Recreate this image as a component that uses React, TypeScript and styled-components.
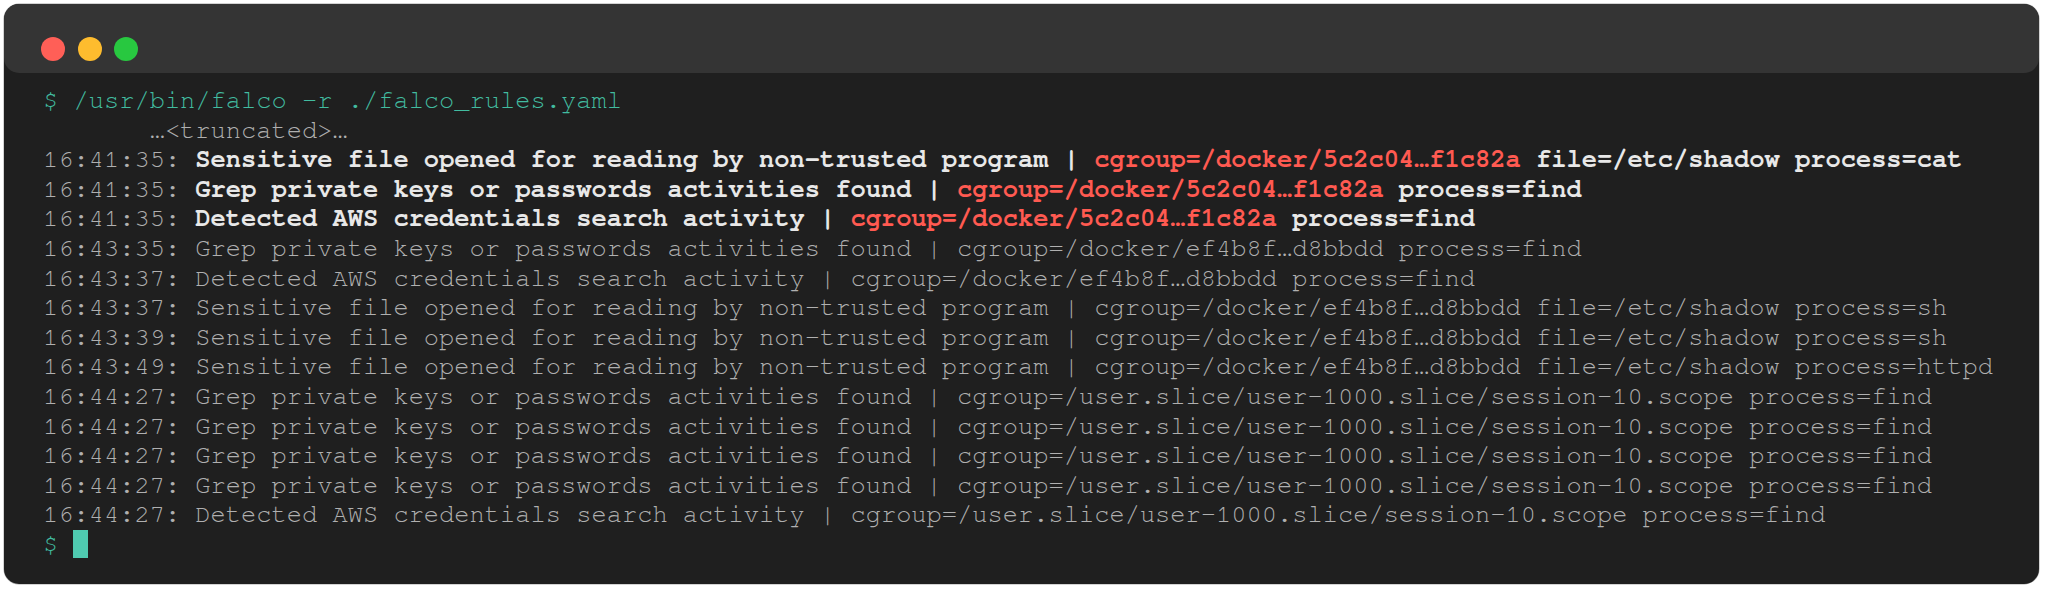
import React from "react";
import styled, { createGlobalStyle } from "styled-components";

const Global = createGlobalStyle`
  html, body { margin: 0; padding: 0; background: #ffffff; }
  #root { padding: 4px; }
`;

const Window = styled.div`
  width: 2035px;
  height: 580px;
  box-sizing: border-box;
  border-radius: 15px;
  background: #1f1f1f;
  overflow: hidden;
  box-shadow: 0 0 0 0.5px rgba(0, 0, 0, 0.35);
  display: flex;
  flex-direction: column;
`;

const TitleBar = styled.div`
  height: 69px;
  flex: none;
  box-sizing: border-box;
  background: #343434;
  border-radius: 15px;
  display: flex;
  align-items: flex-start;
  gap: 12.5px;
  padding: 33px 0 0 37px;
`;

const Dot = styled.span<{ $color: string }>`
  width: 24px;
  height: 24px;
  border-radius: 50%;
  background: ${(p) => p.$color};
  display: block;
`;

const Body = styled.div`
  padding: 13px 0 0 39px;
  font-family: "Nimbus Mono PS", "Nimbus Mono L", "FreeMono", "Courier", "Liberation Mono", monospace;
  font-size: 25.4px;
  line-height: 29.6px;
  color: #b0b0b0;
  white-space: pre;
`;

const Line = styled.div<{ $tone?: "prompt" | "normal" }>`
  color: ${(p) => (p.$tone === "prompt" ? "#42bca0" : "#b0b0b0")};
  height: 29.6px;
`;

const Strong = styled.span<{ $red?: boolean }>`
  font-weight: 700;
  color: ${(p) => (p.$red ? "#ff5a51" : "#e8e8e8")};
`;

const Cursor = styled.span`
  display: inline-block;
  width: 15px;
  height: 28px;
  background: #4fcab0;
  vertical-align: -6px;
`;

type Alert = {
  time: string;
  rule: string;
  cgroup: string;
  file?: string;
  proc: string;
};

const hot: Alert[] = [
  {
    time: "16:41:35",
    rule: "Sensitive file opened for reading by non-trusted program",
    cgroup: "cgroup=/docker/5c2c04…f1c82a",
    file: "/etc/shadow",
    proc: "cat",
  },
  {
    time: "16:41:35",
    rule: "Grep private keys or passwords activities found",
    cgroup: "cgroup=/docker/5c2c04…f1c82a",
    proc: "find",
  },
  {
    time: "16:41:35",
    rule: "Detected AWS credentials search activity",
    cgroup: "cgroup=/docker/5c2c04…f1c82a",
    proc: "find",
  },
];

const cold: Alert[] = [
  { time: "16:43:35", rule: "Grep private keys or passwords activities found", cgroup: "cgroup=/docker/ef4b8f…d8bbdd", proc: "find" },
  { time: "16:43:37", rule: "Detected AWS credentials search activity", cgroup: "cgroup=/docker/ef4b8f…d8bbdd", proc: "find" },
  { time: "16:43:37", rule: "Sensitive file opened for reading by non-trusted program", cgroup: "cgroup=/docker/ef4b8f…d8bbdd", file: "/etc/shadow", proc: "sh" },
  { time: "16:43:39", rule: "Sensitive file opened for reading by non-trusted program", cgroup: "cgroup=/docker/ef4b8f…d8bbdd", file: "/etc/shadow", proc: "sh" },
  { time: "16:43:49", rule: "Sensitive file opened for reading by non-trusted program", cgroup: "cgroup=/docker/ef4b8f…d8bbdd", file: "/etc/shadow", proc: "httpd" },
  { time: "16:44:27", rule: "Grep private keys or passwords activities found", cgroup: "cgroup=/user.slice/user-1000.slice/session-10.scope", proc: "find" },
  { time: "16:44:27", rule: "Grep private keys or passwords activities found", cgroup: "cgroup=/user.slice/user-1000.slice/session-10.scope", proc: "find" },
  { time: "16:44:27", rule: "Grep private keys or passwords activities found", cgroup: "cgroup=/user.slice/user-1000.slice/session-10.scope", proc: "find" },
  { time: "16:44:27", rule: "Grep private keys or passwords activities found", cgroup: "cgroup=/user.slice/user-1000.slice/session-10.scope", proc: "find" },
  { time: "16:44:27", rule: "Detected AWS credentials search activity", cgroup: "cgroup=/user.slice/user-1000.slice/session-10.scope", proc: "find" },
];

const tail = (a: Alert) => `${a.file ? ` file=${a.file}` : ""} process=${a.proc}`;

export default function App() {
  return (
    <>
      <Global />
      <Window>
        <TitleBar>
          <Dot $color="#ff5f57" />
          <Dot $color="#febc2e" />
          <Dot $color="#28c840" />
        </TitleBar>
        <Body>
          <Line $tone="prompt">$ /usr/bin/falco -r ./falco_rules.yaml</Line>
          <Line>{"       …<truncated>…"}</Line>
          {hot.map((a, i) => (
            <Line key={"h" + i}>
              {a.time}:{" "}
              <Strong>{a.rule} | </Strong>
              <Strong $red>{a.cgroup}</Strong>
              <Strong>{tail(a)}</Strong>
            </Line>
          ))}
          {cold.map((a, i) => (
            <Line key={"c" + i}>
              {`${a.time}: ${a.rule} | ${a.cgroup}${tail(a)}`}
            </Line>
          ))}
          <Line $tone="prompt">
            {"$ "}
            <Cursor />
          </Line>
        </Body>
      </Window>
    </>
  );
}
